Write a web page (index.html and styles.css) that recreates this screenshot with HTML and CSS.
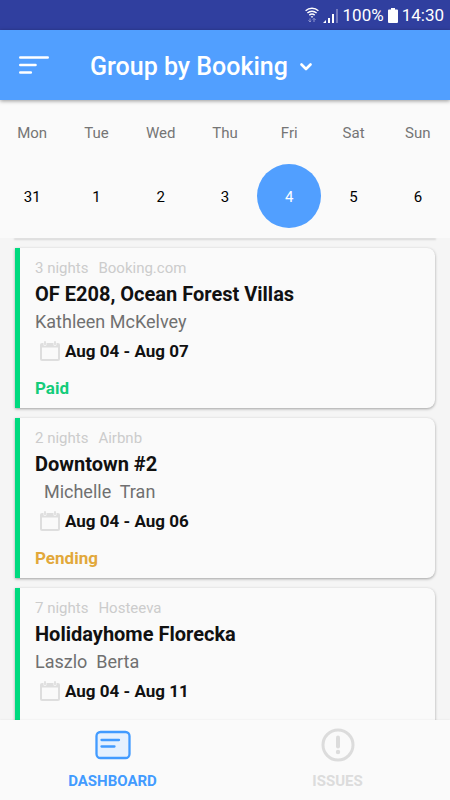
FILE: index.html
```html
<!DOCTYPE html>
<html lang="en">
<head>
    <meta charset="UTF-8">
    <meta name="viewport" content="width=device-width, initial-scale=1.0">
    <title>Bookings</title>
    <link rel="stylesheet" href="styles.css">
</head>
<body>
    <div class="status-bar">
        <svg class="wifi-icon" width="14" height="16" viewBox="0 0 14 16" fill="none" stroke="#fff" stroke-width="1.4">
            <path d="M0.6 3.8C4.2 0.4 9.8 0.4 13.4 3.8M2.4 6C5 3.6 9 3.6 11.6 6M4.3 8.1C5.9 6.7 8.1 6.7 9.7 8.1"/>
            <path d="M5.600 9.300h2.800L7 10.900z" fill="#fff" stroke="none"/>
            <path d="M5 11.400V15M3.400 13.400L5 15l1.200-1.200M9 15v-3.600M7.800 12.600L9 11.400l1.600 1.600" stroke="#8f96cf" stroke-width="1"/>
        </svg>
        <svg class="signal-icon" width="16" height="15" viewBox="0 0 16 15">
            <path d="M0 15l3-3v3zM5 10h2v5H5zM9 6h2v9H9z" fill="#fff"/>
            <path d="M13 1h2v14h-2z" fill="#7279be"/>
        </svg>
        <span class="battery-level">100%</span>
        <svg class="battery-icon" width="10" height="15" viewBox="0 0 10 15" fill="#fff">
            <path d="M3 0h4v1.500h2a1 1 0 0 1 1 1V14a1 1 0 0 1-1 1H1a1 1 0 0 1-1-1V2.500a1 1 0 0 1 1-1h2z"/>
        </svg>
        <span class="clock">14:30</span>
    </div>

    <header class="app-bar">
        <button type="button" class="menu-button" aria-label="Menu">
            <svg width="30" height="18" viewBox="0 0 30 18" stroke="#fff" stroke-width="2.600" stroke-linecap="round">
                <path d="M1.300 1.500h27.400M1.300 9h15.200M1.300 16.500h10.500"/>
            </svg>
        </button>
        <div class="group-by">
            <select class="group-select" aria-label="Grouping">
                <option>Group by Booking</option>
            </select>
            <svg width="12" height="8" viewBox="0 0 12 8" fill="none" stroke="#fff" stroke-width="2.600" stroke-linecap="round" stroke-linejoin="round">
                <path d="M1.500 1.500L6 6l4.500-4.500"/>
            </svg>
        </div>
    </header>

    <section class="week">
        <div class="day"><span class="day-name">Mon</span><button type="button" class="date">31</button></div>
        <div class="day"><span class="day-name">Tue</span><button type="button" class="date">1</button></div>
        <div class="day"><span class="day-name">Wed</span><button type="button" class="date">2</button></div>
        <div class="day"><span class="day-name">Thu</span><button type="button" class="date">3</button></div>
        <div class="day"><span class="day-name">Fri</span><button type="button" class="date selected">4</button></div>
        <div class="day"><span class="day-name">Sat</span><button type="button" class="date">5</button></div>
        <div class="day"><span class="day-name">Sun</span><button type="button" class="date">6</button></div>
    </section>

    <svg class="symbols" width="0" height="0">
        <symbol id="calendar" viewBox="0 0 20 20">
            <path d="M2 2h1.500v1.500a1.500 1.500 0 0 0 3 0V2h7v1.500a1.500 1.500 0 0 0 3 0V2H18a2 2 0 0 1 2 2v14a2 2 0 0 1-2 2H2a2 2 0 0 1-2-2V4a2 2 0 0 1 2-2zM2 6.500V18h16V6.500z" fill="#dedede" fill-rule="evenodd"/>
            <path d="M5 1v2.400M15 1v2.400" stroke="#dedede" stroke-width="1.800" stroke-linecap="round"/>
        </symbol>
    </svg>

    <main class="bookings">
        <article class="card">
            <p class="meta"><span>3 nights</span><span>Booking.com</span></p>
            <h2 class="property">OF E208, Ocean Forest Villas</h2>
            <p class="guest">Kathleen McKelvey</p>
            <p class="dates"><svg width="20" height="20"><use href="#calendar"/></svg>Aug 04 - Aug 07</p>
            <p class="status paid">Paid</p>
        </article>
        <article class="card">
            <p class="meta"><span>2 nights</span><span>Airbnb</span></p>
            <h2 class="property">Downtown #2</h2>
            <p class="guest">  Michelle  Tran</p>
            <p class="dates"><svg width="20" height="20"><use href="#calendar"/></svg>Aug 04 - Aug 06</p>
            <p class="status pending">Pending</p>
        </article>
        <article class="card">
            <p class="meta"><span>7 nights</span><span>Hosteeva</span></p>
            <h2 class="property">Holidayhome Florecka</h2>
            <p class="guest">Laszlo  Berta</p>
            <p class="dates"><svg width="20" height="20"><use href="#calendar"/></svg>Aug 04 - Aug 11</p>
        </article>
    </main>

    <nav class="tab-bar">
        <a href="#dashboard" class="tab active">
            <svg width="36" height="34" viewBox="0 0 36 34" stroke="#429bff" stroke-width="2.300" stroke-linecap="round">
                <rect x="1.500" y="4" width="33" height="26" rx="4" fill="#e6f1fe"/>
                <path d="M6.500 12h17.500M6.500 18.500h13"/>
            </svg>
            DASHBOARD
        </a>
        <a href="#issues" class="tab">
            <svg width="34" height="34" viewBox="0 0 34 34" fill="none" stroke="#dcdcdc" stroke-linecap="round">
                <circle cx="17" cy="17" r="15" stroke-width="3"/>
                <path d="M17 9.500v9" stroke-width="4"/>
                <circle cx="17" cy="24" r="2.200" fill="#dcdcdc" stroke="none"/>
            </svg>
            ISSUES
        </a>
    </nav>
</body>
</html>
```
FILE: styles.css
```css
* {
    box-sizing: border-box;
}

body {
    margin: 0;
    height: 100vh;
    display: flex;
    flex-direction: column;
    overflow: hidden;
    font-family: Roboto, sans-serif;
    background-color: #f5f5f5;
}

h2, p {
    margin: 0;
}

button {
    padding: 0;
    border: none;
    background: none;
    font-family: inherit;
    cursor: pointer;
}

.symbols {
    position: absolute;
}

/* Phone status bar */
.status-bar {
    flex: none;
    height: 30px;
    padding: 0 6px;
    display: flex;
    align-items: center;
    justify-content: flex-end;
    gap: 4px;
    background-color: #303f9f;
    color: #fff;
    font-size: 17px;
}

/* App bar */
.app-bar {
    flex: none;
    height: 70px;
    padding: 0 19px;
    display: flex;
    align-items: center;
    gap: 41px;
    background-color: #519fff;
    box-shadow: 0 1px 4px rgba(0, 0, 0, 0.4);
    z-index: 2;
}

.menu-button, .menu-button svg {
    display: block;
}

.group-by {
    padding-top: 3px;
    display: flex;
    align-items: center;
    gap: 12px;
}

.group-select {
    appearance: none;
    padding: 0;
    border: none;
    background: none;
    color: #fff;
    font-family: inherit;
    font-size: 25px;
    font-weight: 500;
    line-height: 32px;
}

/* Week strip */
.week {
    flex: none;
    padding: 17px 0 10px;
    display: grid;
    grid-template-columns: repeat(7, 1fr);
    background-color: #fafafa;
    z-index: 1;
}

.day {
    display: flex;
    flex-direction: column;
    align-items: center;
    gap: 15px;
}

.day-name {
    color: #757575;
    font-size: 15px;
    line-height: 32px;
}

.date {
    width: 100%;
    max-width: 64px;
    aspect-ratio: 1;
    padding-top: 2px;
    border-radius: 50%;
    color: #000;
    font-size: 15px;
}

.date.selected {
    background-color: #519fff;
    color: #fff;
}

/* Booking list */
.bookings {
    flex: 1;
    min-height: 0;
    padding: 0 15px;
    display: flex;
    flex-direction: column;
    gap: 10px;
    overflow: hidden;
}

/* bottom edge of the card scrolled under the week strip */
.bookings::before {
    content: "";
    flex: none;
    height: 0;
    box-shadow: 0 1px 2px 1px rgba(0, 0, 0, 0.12);
}

.card {
    flex: none;
    height: 160px;
    padding: 10px 15px;
    border-left: 5px solid #00da7f;
    border-radius: 0 8px 8px 0;
    background-color: #fafafa;
    box-shadow: 0 1px 3px rgba(0, 0, 0, 0.35);
}

.meta {
    display: flex;
    gap: 10px;
    color: #ccc;
    font-size: 15px;
    line-height: 20px;
}

.property {
    color: #111;
    font-size: 20px;
    font-weight: 700;
    line-height: 32px;
}

.guest {
    color: #707070;
    font-size: 18px;
    line-height: 24px;
    white-space: pre;
}

.dates {
    padding-left: 5px;
    display: flex;
    align-items: center;
    gap: 5px;
    color: #111;
    font-size: 17px;
    font-weight: 700;
    line-height: 34px;
}

.status {
    font-size: 17px;
    font-weight: 700;
    line-height: 40px;
}

.paid {
    color: #14cc7a;
}

.pending {
    color: #e2a83a;
}

/* Bottom tabs */
.tab-bar {
    flex: none;
    height: 80px;
    display: flex;
    background-color: #fafafa;
    box-shadow: 0 0 2px rgba(0, 0, 0, 0.08);
    z-index: 1;
}

.tab {
    flex: 1;
    padding-top: 8px;
    display: flex;
    flex-direction: column;
    align-items: center;
    gap: 9px;
    color: #dcdcdc;
    font-size: 15px;
    font-weight: 700;
    line-height: 20px;
    text-decoration: none;
}

.tab.active {
    color: #429bff;
}
```
